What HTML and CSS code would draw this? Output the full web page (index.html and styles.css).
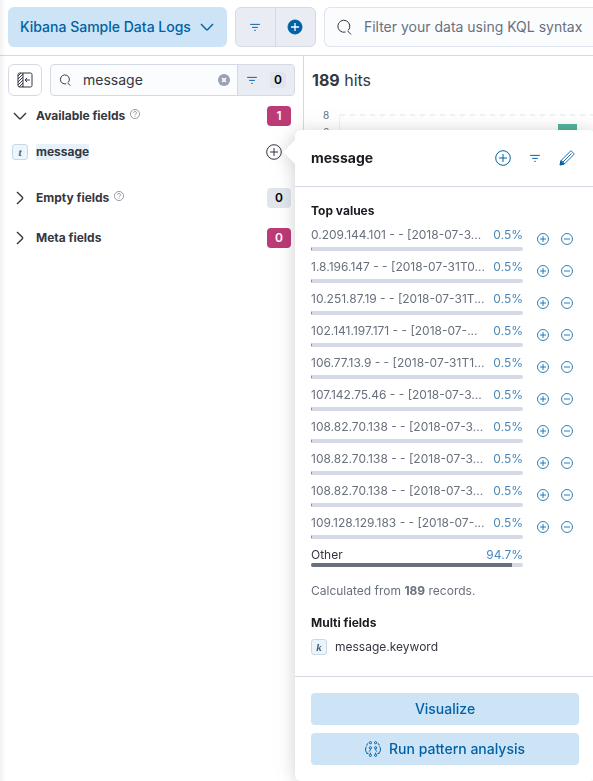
FILE: index.html
```html
<!DOCTYPE html>
<html lang="en">
<head>
<meta charset="utf-8">
<meta name="viewport" content="width=device-width, initial-scale=1">
<title>Discover</title>
<link rel="stylesheet" href="styles.css">
</head>
<body>
<svg class="defs" aria-hidden="true">
  <defs>
    <symbol id="chevron-down" viewBox="0 0 16 16"><path d="M2 5l5.3 5.4a1 1 0 0 0 1.4 0L14 5"/></symbol>
    <symbol id="chevron-right" viewBox="0 0 16 16"><path d="M5 2l5.4 5.3a1 1 0 0 1 0 1.4L5 14"/></symbol>
    <symbol id="filter" viewBox="0 0 16 16"><path d="M1.500 4.500h13M4.200 8.500h7.600M7 12.500h2"/></symbol>
    <symbol id="search" viewBox="0 0 16 16"><path d="M12.2 11.4A6 6 0 1 0 9.6 13M11.6 11.9l3.4 3.6"/></symbol>
    <symbol id="plus-circle" viewBox="0 0 16 16"><circle cx="8" cy="8" r="7.3"/><path d="M8 4v8M4 8h8"/></symbol>
    <symbol id="minus-circle" viewBox="0 0 16 16"><circle cx="8" cy="8" r="7.3"/><path d="M4 8h8"/></symbol>
    <symbol id="help" viewBox="0 0 16 16"><circle cx="8" cy="8" r="7.3"/><path d="M5.7 6.2a2.3 2.3 0 1 1 3.4 2c-.8.5-1.1.8-1.1 1.7M8 11.4v1.2"/></symbol>
  </defs>
</svg>
<div class="app">
  <header class="topbar">
    <button class="data-view" type="button">Kibana Sample Data Logs
      <svg class="icon"><use href="#chevron-down"/></svg>
    </button>
    <div class="filter-group">
      <button type="button" aria-label="Saved queries"><svg class="icon small"><use href="#filter"/></svg></button>
      <button type="button" aria-label="Add filter">
        <svg class="icon" viewBox="0 0 16 16"><circle class="solid" cx="8" cy="8" r="7"/><path class="cut" d="M8 4v8M4 8h8"/></svg>
      </button>
    </div>
    <label class="query">
      <svg class="icon"><use href="#search"/></svg>
      <input type="text" aria-label="Query" placeholder="Filter your data using KQL syntax">
    </label>
  </header>
  <div class="content">
    <aside class="sidebar">
      <div class="field-search">
        <button class="collapse" type="button" aria-label="Hide fields">
          <svg class="icon" viewBox="0 0 16 16"><rect x="1" y="1" width="14" height="14" rx="1.5"/><path d="M6 1v14M8 8h5M10 6L8 8l2 2"/><path class="hatch" d="M1 4l3-3M1 7l5-5M1 10l5-5M1 13l5-5M2 15l4-4M5 15l1-1"/></svg>
        </button>
        <div class="search-group">
          <label class="search-box">
            <svg class="icon small"><use href="#search"/></svg>
            <input type="text" aria-label="Search field names" value="message">
          </label>
          <button class="clear" type="button" aria-label="Clear">
            <svg viewBox="0 0 12 12"><circle cx="6" cy="6" r="6"/><path d="M4 4l4 4M8 4L4 8"/></svg>
          </button>
          <button class="type-filter" type="button" aria-label="Filter by type, 0 selected">
            <svg class="icon small"><use href="#filter"/></svg><span class="count">0</span>
          </button>
        </div>
      </div>
      <section class="group">
        <button class="group-head" type="button">
          <svg class="icon"><use href="#chevron-down"/></svg><span>Available fields</span>
          <svg class="icon tip"><use href="#help"/></svg><span class="badge accent">1</span>
        </button>
        <div class="field">
          <span class="token">t</span><mark>message</mark>
          <button type="button" aria-label="Add message"><svg class="icon"><use href="#plus-circle"/></svg></button>
        </div>
      </section>
      <section class="group">
        <button class="group-head" type="button">
          <svg class="icon"><use href="#chevron-right"/></svg><span>Empty fields</span>
          <svg class="icon tip"><use href="#help"/></svg><span class="badge">0</span>
        </button>
      </section>
      <section class="group">
        <button class="group-head" type="button">
          <svg class="icon"><use href="#chevron-right"/></svg><span>Meta fields</span>
          <span class="badge accent">0</span>
        </button>
      </section>
    </aside>
    <main class="results">
      <p class="hits"><strong>189</strong> hits</p>
      <svg class="chart" role="img" aria-label="Hits over time">
        <text x="19" y="12">8</text><text x="19" y="29">6</text>
        <path class="axis" d="M35.5 8V600"/>
        <path class="grid" d="M36 8H900"/>
        <rect x="254" y="17" width="19" height="500"/>
      </svg>
    </main>
  </div>

  <div class="popover" role="dialog" aria-label="message">
    <div class="popover-head">
      <h2>message</h2>
      <button type="button" aria-label="Add field"><svg class="icon"><use href="#plus-circle"/></svg></button>
      <button type="button" aria-label="Filter for field"><svg class="icon small"><use href="#filter"/></svg></button>
      <button type="button" aria-label="Edit field">
        <svg class="icon pencil" viewBox="0 0 16 16"><path d="M1.2 14.8l1-4.4L11.3 1.3a1 1 0 0 1 1.4 0l2 2a1 1 0 0 1 0 1.4L5.6 13.8zM2.2 10.4l3.4 3.4M4 12l8.500-8.500"/><path class="solid" d="M1 15l.8-4 3.2 3.2z"/></svg>
      </button>
    </div>
    <div class="popover-body">
      <h3>Top values</h3>
      <ul class="values" id="values"></ul>
      <p class="note">Calculated from <strong>189</strong> records.</p>
      <h3>Multi fields</h3>
      <div class="multi"><span class="token">k</span>message.keyword</div>
    </div>
    <div class="popover-foot">
      <button type="button">Visualize</button>
      <button type="button">
        <svg class="icon" viewBox="0 0 16 16"><circle cx="5.4" cy="1.7" r="1.1"/><circle cx="10.6" cy="1.7" r="1.1"/><circle cx="5.4" cy="6.8" r="1.1"/><circle cx="10.6" cy="6.8" r="1.1"/><circle cx="5.4" cy="14.3" r="1.1"/><circle cx="10.6" cy="14.3" r="1.1"/><path d="M3.200 2.300Q1.800 2.800 1.800 4.600M1.500 5.500Q.6 6.200.6 8v1.800q0 1 1.200 1.400v1.300h1.700M12.800 2.300q1.400.5 1.400 2.300M14.500 5.500q.9.700.9 2.500v1.800q0 1-1.200 1.400v1.300h-1.700M5.400 8.200v1L3.800 10.600M10.600 8.200v1l1.600 1.400M5.400 12.900v-1.200M10.600 12.900v-1.200"/></svg>
        Run pattern analysis
      </button>
    </div>
  </div>
</div>
<script src="values.js"></script>
</body>
</html>
```
FILE: styles.css
```css
* { box-sizing: border-box; }
body {
  margin: 0;
  font-family: Inter, "Liberation Sans", sans-serif;
  font-size: 12px;
  line-height: 16px;
  color: #343741;
  background: #fff;
}
h2, h3, p, ul { margin: 0; padding: 0; }
button, input { font: inherit; color: inherit; }
button { padding: 0; border: 0; background: none; display: flex; align-items: center; justify-content: center; }
input { border: 0; padding: 0; background: none; outline: 0; min-width: 0; }
.defs { position: absolute; width: 0; height: 0; }
.icon { width: 16px; height: 16px; flex: none; fill: none; stroke: currentColor; stroke-width: 1; overflow: visible; }
.icon.small { width: 12px; height: 12px; stroke-width: 1.3; }
.icon.pencil { stroke-width: .9; }
.icon .solid { fill: currentColor; }
.icon .cut { stroke: #fff; stroke-width: 1.3; }
.icon .hatch { stroke-width: 1; }

.app { position: relative; display: flex; flex-direction: column; height: 100vh; overflow: hidden; }
.app::before {
  content: "";
  position: absolute;
  inset: 0 auto 0 0;
  width: 6px;
  background: linear-gradient(to right, rgba(0, 0, 0, .05), transparent);
}

.topbar { display: flex; flex: none; gap: 8px; padding: 7px 0 8px 8px; border-bottom: 1px solid #d3dae6; }
.data-view {
  flex: none;
  height: 40px;
  padding: 0 12px;
  gap: 8px;
  border-radius: 6px;
  background: #cce4f5;
  color: #0061a6;
  font-size: 14px;
  font-weight: 500;
}
.data-view .icon { stroke-width: 1.4; }
.filter-group { display: flex; flex: none; width: 81px; border: 1px solid #d3dae6; border-radius: 6px; background: #e9edf3; color: #0061a6; }
.filter-group button { flex: 1; }
.filter-group button + button { border-left: 1px solid #d3dae6; }
.query {
  display: flex;
  flex: 1;
  align-items: center;
  gap: 12px;
  height: 40px;
  padding-left: 11px;
  border: 1px solid #dfe5ef;
  border-right: 0;
  border-radius: 6px 0 0 6px;
  background: #fbfcfd;
}
.query input { flex: 1; font-size: 14px; }
.query input::placeholder { color: #69707d; opacity: 1; }

.content { display: flex; flex: 1; min-height: 0; }
.sidebar { flex: none; width: 304px; padding: 8px; border-right: 1px solid #d3dae6; }
.field-search { display: flex; gap: 8px; }
.collapse { width: 34px; height: 32px; border: 1px solid #d3dae6; border-radius: 6px; }
.search-group { display: flex; flex: 1; height: 32px; border: 1px solid #d3dae6; border-radius: 4px; background: #fbfcfd; overflow: hidden; }
.search-box { display: flex; flex: 1; align-items: center; gap: 12px; padding-left: 8px; min-width: 0; }
.search-box input { flex: 1; width: 0; font-size: 14px; }
.clear { width: 26px; }
.clear svg { width: 12px; height: 12px; fill: #98a2b3; stroke: none; }
.clear path { stroke: #fff; stroke-width: 1.6; }
.type-filter { width: 57px; gap: 12px; border-left: 1px solid #d3dae6; background: #e9edf3; color: #0061a6; }
.count { width: 16px; border-radius: 3px; background: #e0e5ee; color: #000; font-weight: 600; }

.group { padding: 10px 4px; }
.group-head { width: 100%; gap: 8px; height: 20px; font-weight: 700; }
.group-head .icon { stroke-width: 1.4; }
.group-head .tip { width: 10px; height: 10px; margin: 0 0 4px -3px; color: #69707d; stroke-width: 1.1; }
.badge { width: 24px; margin-left: auto; line-height: 20px; border-radius: 4px; background: #e0e5ee; color: #000; font-weight: 600; }
.badge.accent { background: #bc3a76; color: #fff; }
.field { display: flex; align-items: center; gap: 8px; height: 32px; margin-top: 10px; font-weight: 700; }
.field button { margin-left: auto; margin-right: 9px; }
.field mark { background: #e6f1fa; color: inherit; }
.token {
  width: 16px;
  height: 16px;
  flex: none;
  border: 1px solid #c5d9e8;
  border-radius: 3px;
  background: #edf4fa;
  color: #3b6285;
  font: italic bold 11px/14px "Liberation Serif", serif;
  text-align: center;
}

.results { display: flex; flex-direction: column; flex: 1; min-width: 0; overflow: hidden; }
.hits { padding: 12px 8px; font-size: 16px; line-height: 24px; }
.chart { width: 100%; flex: 1; margin-top: 3px; }
.chart text { font-size: 10px; fill: #69707d; }
.chart path { fill: none; stroke: #eef0f4; }
.chart .grid { stroke-width: 2; stroke-dasharray: 5 5; stroke: #f1f2f5; }
.chart rect { fill: #54b399; }

.popover {
  position: absolute;
  top: 130px;
  bottom: 0;
  left: 295px;
  width: 300px;
  display: flex;
  flex-direction: column;
  border-radius: 6px;
  background: #fff;
  filter: drop-shadow(0 2px 8px rgba(0, 0, 0, .14)) drop-shadow(0 0 12px rgba(0, 0, 0, .06));
}
.popover::before {
  content: "";
  position: absolute;
  top: 10px;
  left: -12px;
  width: 12px;
  height: 24px;
  background: #fff;
  clip-path: polygon(100% 0, 0 50%, 100% 100%);
}
.popover-head { display: flex; align-items: center; gap: 16px; padding: 16px 20px 16px 16px; border-bottom: 1px solid #d3dae6; color: #0061a6; }
.popover h2 { flex: 1; color: #1a1c21; font-size: 14px; line-height: 24px; font-weight: 700; }
.popover-head button { width: 16px; height: 16px; }
.popover-body { flex: 1; padding: 16px; }
.popover h3 { color: #1a1c21; font-size: 12px; line-height: 16px; font-weight: 700; }
.values { display: flex; flex-direction: column; gap: 8px; margin: 8px 0 16px; list-style: none; }
.values li { display: flex; align-items: center; color: #0061a6; }
.values button { width: 24px; height: 16px; }
.values button .icon { stroke-width: 1.1; }
.value { width: 212px; margin-right: 8px; display: flex; flex-direction: column; gap: 4px; color: #69707d; }
.value.other { gap: 0; color: #343741; }
.label { display: flex; justify-content: space-between; white-space: nowrap; }
.label b { color: #4a87bd; font-weight: 400; }
.bar { height: 4px; border-radius: 2px; background: #d3dae6; overflow: hidden; }
.bar i { display: block; height: 4px; background: #4a87bd; }
.other .bar i { background: #69707d; }
.note { margin-bottom: 16px; color: #69707d; }
.multi { display: flex; align-items: center; gap: 8px; margin-top: 8px; }
.popover-foot { display: flex; flex-direction: column; gap: 8px; padding: 16px; border-top: 1px solid #d3dae6; }
.popover-foot button { height: 32px; gap: 8px; border-radius: 4px; background: #cce4f5; color: #0061a6; font-size: 14px; font-weight: 500; }
```
FILE: values.js
```js
const values = [
  ["0.209.144.101 - - [2018-07-3...", 0.5],
  ["1.8.196.147 - - [2018-07-31T0...", 0.5],
  ["10.251.87.19 - - [2018-07-31T...", 0.5],
  ["102.141.197.171 - - [2018-07-...", 0.5],
  ["106.77.13.9 - - [2018-07-31T1...", 0.5],
  ["107.142.75.46 - - [2018-07-3...", 0.5],
  ["108.82.70.138 - - [2018-07-3...", 0.5],
  ["108.82.70.138 - - [2018-07-3...", 0.5],
  ["108.82.70.138 - - [2018-07-3...", 0.5],
  ["109.128.129.183 - - [2018-07-...", 0.5],
  ["Other", 94.7]
];

const action = (label, icon) =>
  `<button type="button" aria-label="${label}"><svg class="icon small"><use href="#${icon}"/></svg></button>`;

document.getElementById("values").innerHTML = values.map(([text, share]) => {
  const other = text === "Other";
  return `<li><div class="value${other ? " other" : ""}">
    <div class="label"><span>${text}</span><b>${share}%</b></div>
    <div class="bar"><i style="width:${share}%"></i></div></div>
    ${other ? "" : action("Filter for", "plus-circle") + action("Filter out", "minus-circle")}</li>`;
}).join("");
```
